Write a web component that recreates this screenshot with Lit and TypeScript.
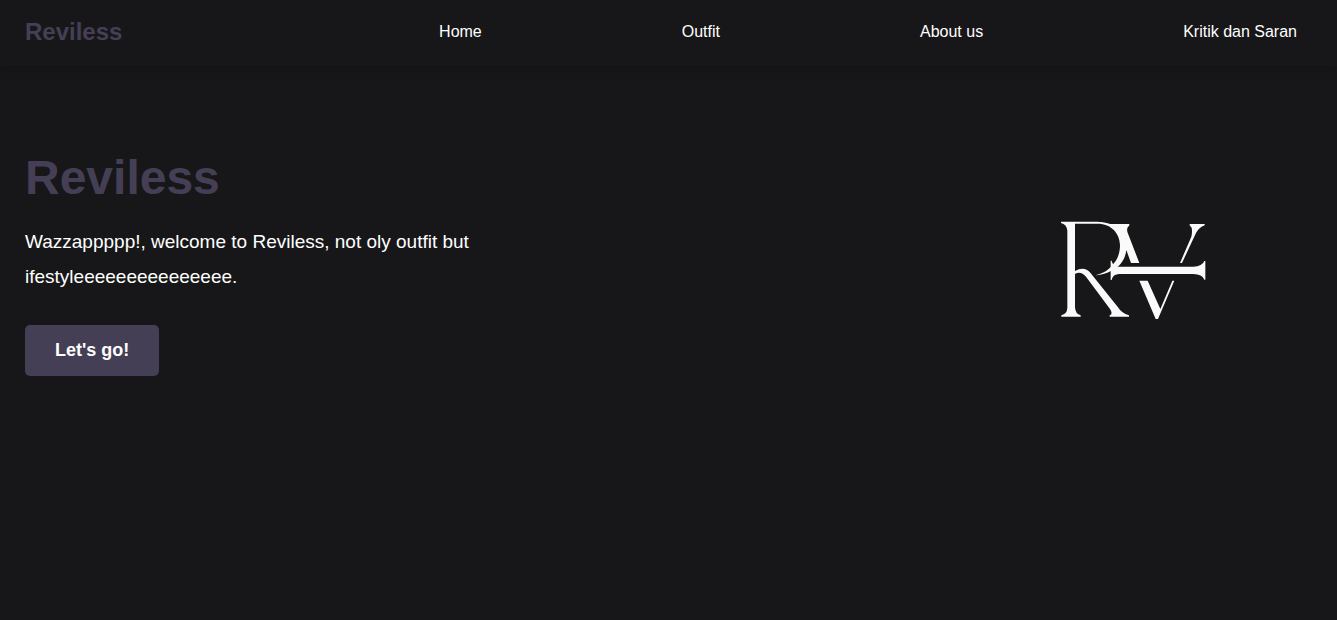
import { LitElement, html, css } from "lit";
import { customElement } from "lit/decorators.js";

@customElement("app-root")
export class AppRoot extends LitElement {
  static styles = css`
    :host {
      display: flex;
      flex-direction: column;
      min-height: 100vh;
      background: #171719;
      color: #fff;
      font-family: "Liberation Sans", Arial, sans-serif;
      font-size: 16px;
    }
    a {
      color: inherit;
      text-decoration: none;
    }
    .navbar {
      display: flex;
      align-items: center;
      justify-content: space-between;
      padding: 18px 40px 20px 25px;
      box-shadow: 0 4px 10px rgba(0, 0, 0, 0.15);
    }
    .brand {
      color: #453f56;
      font-size: 24px;
      font-weight: bold;
      line-height: 28px;
    }
    .links {
      display: flex;
      gap: 200px;
      margin: 0;
      padding: 0;
      list-style: none;
      line-height: 28px;
    }
    .hero {
      display: flex;
      align-items: flex-start;
      justify-content: space-between;
      padding: 84px 117px 0 25px;
    }
    .copy {
      max-width: 500px;
    }
    .title {
      margin: 0 0 18px;
      color: #453f56;
      font-size: 48px;
      line-height: 56px;
    }
    .lead {
      margin: 0 0 31px;
      font-size: 19px;
      line-height: 35px;
    }
    .cta {
      display: block;
      padding: 15px 30px;
      border: 0;
      border-radius: 5px;
      background: #453f56;
      color: #fff;
      font: bold 18px/21px "Liberation Sans", Arial, sans-serif;
      cursor: pointer;
    }
    .emblem {
      display: block;
      flex: none;
      width: 170px;
      height: 120px;
      margin-top: 60px;
      fill: #fafafa;
    }
  `;

  private links = ["Home", "Outfit", "About us", "Kritik dan Saran"];

  render() {
    return html`
      <nav class="navbar">
        <a class="brand" href="#">Reviless</a>
        <ul class="links">
          ${this.links.map((label) => html`<li><a href="#">${label}</a></li>`)}
        </ul>
      </nav>
      <main class="hero">
        <section class="copy">
          <h1 class="title">Reviless</h1>
          <p class="lead">
            Wazzappppp!, welcome to Reviless, not oly outfit but
            ifestyleeeeeeeeeeeeeee.
          </p>
          <button class="cta" type="button">Let's go!</button>
        </section>
        <svg class="emblem" viewBox="0 0 510 360" role="img" aria-label="RV monogram">
          <!-- stem, bowl and leg of the R -->
          <path d="M33 35H140C158 35 170 38 181 42H238V46Q228 56 233 68L268 159H243L229 120C226 148 210 170 187 181C170 191 150 196 134 196C158 190 174 182 185 167C204 150 210 126 210 105C209 70 184 41 143 41H75V183Q103 168 121 188L204 292Q214 309 237 316V320H179V316Q190 312 180 297L108 200Q92 182 75 192V292Q76 312 92 316V320H34V316Q51 312 52 294V62Q50 43 33 39Z" />
          <!-- crossbar -->
          <path d="M182 152H185Q188 170 208 170H430Q457 169 463 153H466V209H463Q457 193 430 192H208Q188 192 185 210H182Z" />
          <!-- arms and foot of the V -->
          <path d="M419 42H464V46Q447 52 438 69L396 159H390L424 80Q430 54 419 46Z" />
          <path d="M268 212H293L331 297L367 212H373L324 327H317Z" />
        </svg>
      </main>
    `;
  }
}
